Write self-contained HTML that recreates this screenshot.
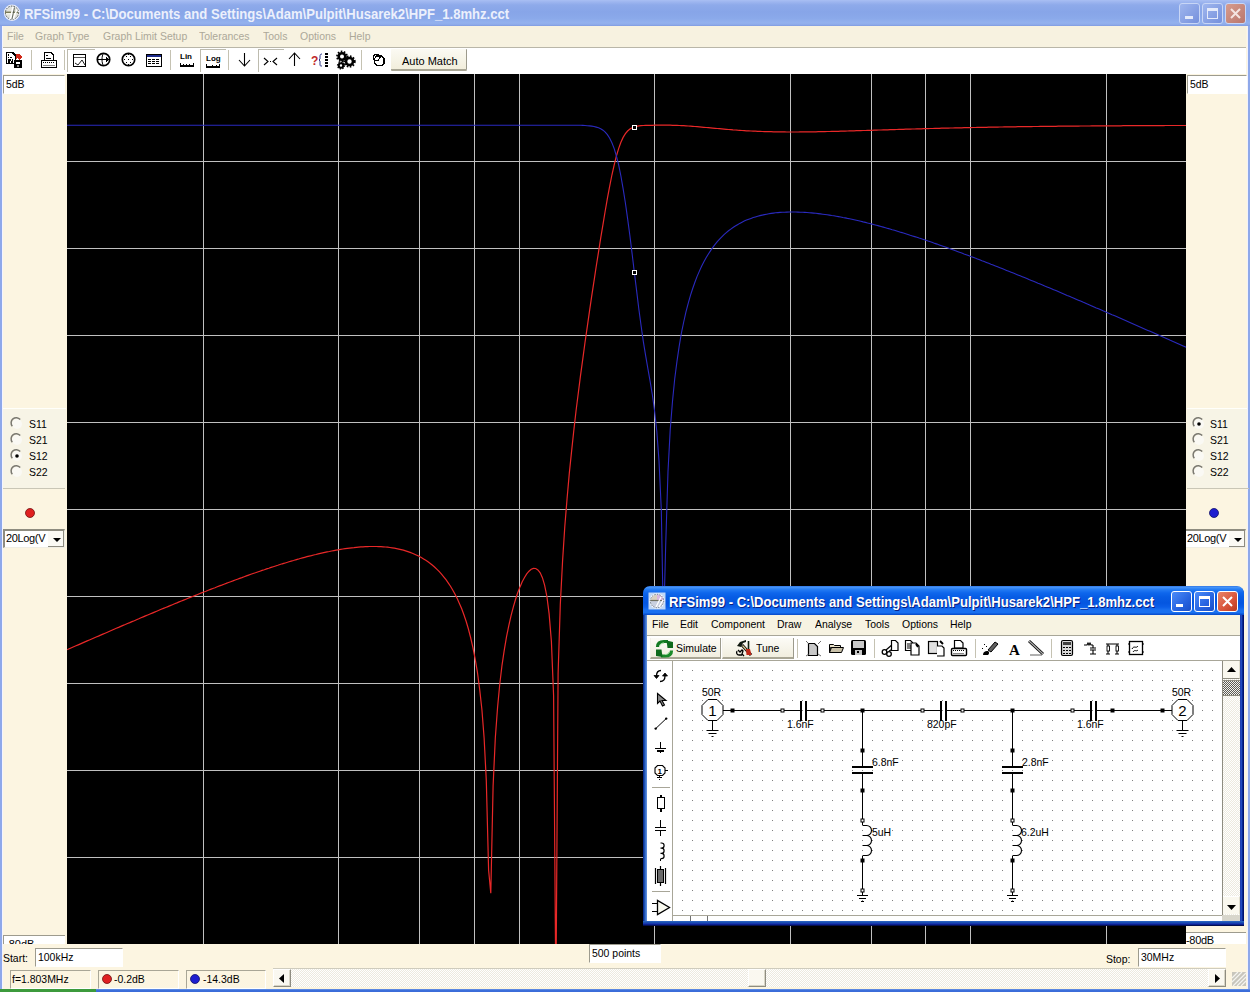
<!DOCTYPE html><html><head><meta charset="utf-8"><title>RFSim99</title><style>
*{margin:0;padding:0;box-sizing:border-box}
html,body{width:1250px;height:992px;overflow:hidden;background:#FCF5E1;font-family:"Liberation Sans", sans-serif;position:relative}
.a{position:absolute}
.t{position:absolute;white-space:pre;font-family:"Liberation Sans", sans-serif}
svg{position:absolute;overflow:visible}
</style></head><body>
<div class="a" style="left:0;top:0;width:1250px;height:26px;background:linear-gradient(#A9BFF3 0px,#9DB5EF 2px,#8EAAEA 5px,#87A5E8 12px,#8AA9EA 18px,#93B1EE 23px,#8CA8E8 25px,#7D99DF 26px)"></div>
<div class="a" style="left:0;top:26px;width:2px;height:966px;background:#8EA8EA"></div>
<div class="a" style="left:2px;top:26px;width:1px;height:963px;background:#F4F4FF"></div>
<div class="a" style="left:1248px;top:26px;width:2px;height:966px;background:#8EA8EA"></div>
<div class="a" style="left:1247px;top:26px;width:1px;height:963px;background:#F2F2FA"></div>
<svg style="left:2px;top:3px" width="22" height="22" viewBox="0 0 22 22"><circle cx="10" cy="9.7" r="7.2" fill="#E2E2DA" stroke="#E8ECF8" stroke-width="2"/><circle cx="10" cy="9.7" r="6.6" fill="none" stroke="#4A524A" stroke-width="1" stroke-dasharray="1.5 1.2"/><path d="M3 9.3H16" stroke="#7A7A58" stroke-width="1.5"/><path d="M4 10.8H13" stroke="#FFFFF0" stroke-width="1"/><path d="M11 4L8.5 16M15 6.5L11 16" stroke="#FFFFFF" stroke-width="1.5"/><path d="M12.5 4.5L10 16" stroke="#505850" stroke-width="0.9"/></svg>
<div class="t" style="left:24px;top:5.67px;font-size:14px;line-height:17px;color:#ECF0FC;font-weight:bold;transform:scaleX(0.935);transform-origin:0 0;">RFSim99 - C:\Documents and Settings\Adam\Pulpit\Husarek2\HPF_1.8mhz.cct</div>
<div class="a" style="left:1179px;top:3px;width:21px;height:21px;border:1px solid #C8D6F6;border-radius:3px;background:linear-gradient(135deg,#9FB6EE,#7590DC)"></div>
<div class="a" style="left:1202px;top:3px;width:21px;height:21px;border:1px solid #C8D6F6;border-radius:3px;background:linear-gradient(135deg,#9FB6EE,#7590DC)"></div>
<div class="a" style="left:1225px;top:3px;width:21px;height:21px;border:1px solid #C8D6F6;border-radius:3px;background:linear-gradient(135deg,#D79C8E,#B9766C)"></div>
<div class="a" style="left:1185px;top:16px;width:8px;height:3px;background:#E4EAFA"></div>
<div class="a" style="left:1207px;top:8px;width:11px;height:11px;border:1px solid #E4EAFA;border-top-width:3px"></div>
<svg style="left:1225px;top:3px" width="21" height="21"><path d="M6 6L15 15M15 6L6 15" stroke="#F4E4E0" stroke-width="2"/></svg>
<div class="a" style="left:3px;top:26px;width:1243px;height:21px;background:#F7F2E0"></div>
<div class="a" style="left:3px;top:47px;width:1243px;height:1px;background:#B9B6A8"></div>
<div class="t" style="left:7px;top:29.06px;font-size:11px;line-height:14px;color:#ACA899;font-weight:normal;transform:scaleX(0.95);transform-origin:0 0;">File</div>
<div class="t" style="left:35px;top:29.06px;font-size:11px;line-height:14px;color:#ACA899;font-weight:normal;transform:scaleX(0.95);transform-origin:0 0;">Graph Type</div>
<div class="t" style="left:103px;top:29.06px;font-size:11px;line-height:14px;color:#ACA899;font-weight:normal;transform:scaleX(0.95);transform-origin:0 0;">Graph Limit Setup</div>
<div class="t" style="left:199px;top:29.06px;font-size:11px;line-height:14px;color:#ACA899;font-weight:normal;transform:scaleX(0.95);transform-origin:0 0;">Tolerances</div>
<div class="t" style="left:263px;top:29.06px;font-size:11px;line-height:14px;color:#ACA899;font-weight:normal;transform:scaleX(0.95);transform-origin:0 0;">Tools</div>
<div class="t" style="left:300px;top:29.06px;font-size:11px;line-height:14px;color:#ACA899;font-weight:normal;transform:scaleX(0.95);transform-origin:0 0;">Options</div>
<div class="t" style="left:349px;top:29.06px;font-size:11px;line-height:14px;color:#ACA899;font-weight:normal;transform:scaleX(0.95);transform-origin:0 0;">Help</div>
<div class="a" style="left:3px;top:48px;width:1243px;height:26px;background:#FFFFFF"></div>
<div class="a" style="left:31px;top:50px;width:1px;height:20px;background:#C5C2B2"></div>
<div class="a" style="left:64px;top:50px;width:1px;height:20px;background:#C5C2B2"></div>
<div class="a" style="left:170px;top:50px;width:1px;height:20px;background:#C5C2B2"></div>
<div class="a" style="left:228px;top:50px;width:1px;height:20px;background:#C5C2B2"></div>
<div class="a" style="left:361px;top:50px;width:1px;height:20px;background:#C5C2B2"></div>
<div class="a" style="left:67px;top:49px;width:28px;height:23px;border-left:1px solid #BDBBAE;border-top:1px solid #BDBBAE;background:#FFFFFF"></div>
<div class="a" style="left:200px;top:49px;width:26px;height:23px;border-left:1px solid #BDBBAE;border-top:1px solid #BDBBAE;background:#FFFFFF"></div>
<div class="a" style="left:258px;top:49px;width:26px;height:23px;border-left:1px solid #BDBBAE;border-top:1px solid #BDBBAE;background:#FFFFFF"></div>
<svg style="left:0;top:0" width="1250" height="80" shape-rendering="crispEdges">
<g fill="none" stroke="#000" stroke-width="1">
<!-- icon1 doc+floppy -->
<path d="M6.5 52.5H12.5L15.5 55.5V63.5H6.5Z" fill="#fff" stroke-width="1.6"/>
<path d="M8 55h1M8 57.5h1M10 57.5h2M8 60h3M12 60h1M8 62h2M11 62h2" stroke="#000" stroke-width="1.2"/>
<path d="M16 53.5l3.5 0.5 2.5 3-2.5 4-1.5-3-2 1z" fill="#D02818" stroke="none"/>
<rect x="14.5" y="60.5" width="7" height="7" fill="#000" stroke-width="1.3"/>
<rect x="16" y="61.5" width="4" height="2" fill="#fff" stroke="none"/>
<rect x="17" y="65" width="2" height="2" fill="#888" stroke="none"/>
<!-- printer -->
<path d="M44.5 52.5H51L53.5 55V60.5H44.5Z" fill="#fff" stroke-width="1.3"/>
<path d="M46 55h2M46 58h5" />
<rect x="41.5" y="60.5" width="15" height="7" rx="1" fill="#fff" stroke-width="1.4"/>
<path d="M43 62.5h12" stroke-dasharray="1 1"/>
<path d="M43 65.5h12" stroke="#888"/>
<!-- graph -->
<rect x="73.5" y="54.5" width="12" height="12" stroke-width="1.2"/>
<path d="M74 57.5h11" stroke="#555"/>
<path d="M75 63l3 2 4-5 3 5" shape-rendering="auto" stroke-width="0.9"/>
<!-- smith -->
<circle cx="103.5" cy="59.5" r="6.2" stroke-width="1.7" shape-rendering="auto"/>
<path d="M97 59.5h10" /><path d="M106 57l2 2.5-2 2.5z" fill="#000"/>
<path d="M103.5 53.5c-2 2-2 10 0 12" shape-rendering="auto"/>
<!-- polar dotted -->
<circle cx="128.5" cy="59.5" r="6.2" stroke-width="1.7" shape-rendering="auto"/>
</g>
<g fill="#000">
<rect x="126" y="56" width="1" height="1"/><rect x="130" y="56" width="1" height="1"/><rect x="124" y="59" width="1" height="1"/><rect x="128" y="59" width="1" height="1"/><rect x="132" y="59" width="1" height="1"/><rect x="126" y="62" width="1" height="1"/><rect x="130" y="62" width="1" height="1"/><rect x="128" y="64" width="1" height="1"/><rect x="128" y="54" width="1" height="1"/>
</g>
<!-- table -->
<rect x="146.5" y="54.5" width="15" height="12" fill="#fff" stroke="#000" stroke-width="1.3"/>
<rect x="147" y="55" width="14" height="2" fill="#1C2A8A"/>
<g fill="#000">
<rect x="148" y="59" width="3" height="1"/><rect x="152" y="59" width="3" height="1"/><rect x="156" y="59" width="3" height="1"/>
<rect x="148" y="61" width="3" height="1"/><rect x="152" y="61" width="3" height="1"/><rect x="156" y="61" width="3" height="1"/>
<rect x="148" y="63" width="3" height="1"/><rect x="152" y="63" width="3" height="1"/><rect x="156" y="63" width="3" height="1"/>
</g>
<!-- Lin -->
<text x="180" y="59" font-family="Liberation Sans" font-weight="bold" font-size="8" fill="#000" shape-rendering="auto">Lin</text>
<path d="M180.5 63v3h13v-3M183.5 64v2M186.5 64v2M189.5 64v2" stroke="#000" fill="none" stroke-width="1.2"/>
<!-- Log -->
<text x="206" y="61" font-family="Liberation Sans" font-weight="bold" font-size="8" fill="#000">Log</text>
<path d="M206.5 64v3h13v-3M212.5 65v2M216.5 65v2" stroke="#000" fill="none" stroke-width="1.2"/>
<!-- down arrow -->
<path d="M244.5 53v13M239 60l5.5 6 5.5-6" stroke="#000" fill="none" stroke-width="1.1" shape-rendering="auto"/>
<!-- >.< -->
<path d="M264 58l4 3.5-4 3.5M277 58l-4 3.5 4 3.5" stroke="#000" fill="none" stroke-width="1.1" shape-rendering="auto"/>
<rect x="270" y="61" width="1" height="1" fill="#000"/>
<!-- up arrow -->
<path d="M294.5 53v13M289 59l5.5-6 5.5 6" stroke="#000" fill="none" stroke-width="1.1" shape-rendering="auto"/>
<!-- ?{ -->
<text x="311" y="65" font-family="Liberation Sans" font-weight="bold" font-size="12" fill="#C02828">?</text>
<path d="M322 54c-2 0-2 1-2 3v2l-1 1 1 1v3c0 2 0 2 2 2" stroke="#303A8A" fill="none" shape-rendering="auto"/>
<g fill="#000"><rect x="325" y="53" width="3" height="2"/><rect x="325" y="56" width="3" height="2"/><rect x="325" y="59" width="3" height="2"/><rect x="325" y="62" width="3" height="2"/><rect x="325" y="65" width="3" height="2"/></g>
<!-- gears -->
<g shape-rendering="auto">
<circle cx="342" cy="56.5" r="3.3" fill="none" stroke="#000" stroke-width="2.6"/>
<circle cx="342" cy="56.5" r="5" fill="none" stroke="#000" stroke-width="1.8" stroke-dasharray="1.6 1.5"/>
<circle cx="349.5" cy="61.5" r="3.5" fill="none" stroke="#000" stroke-width="2.6"/>
<circle cx="349.5" cy="61.5" r="5.3" fill="none" stroke="#000" stroke-width="1.8" stroke-dasharray="1.6 1.5"/>
<circle cx="341" cy="65.5" r="2.2" fill="none" stroke="#000" stroke-width="2"/>
<circle cx="341" cy="65.5" r="3.4" fill="none" stroke="#000" stroke-width="1.4" stroke-dasharray="1.3 1.3"/>
</g>
<!-- two octagons -->
<path d="M375 54.5h3l2 2v1.5M374.5 60.5l-1-1.5v-2.5l1.5-2" stroke="#000" fill="none" stroke-width="1.2"/>
<path d="M376.5 56h5l2.5 2.5v5l-2 2h-5l-2.5-2.5v-4.5z" stroke="#000" fill="none" stroke-width="1.2"/>
<path d="M374.5 60.5h3.5l3-4" stroke="#000" fill="none" stroke-width="1"/>
</svg>
<div class="a" style="left:391px;top:49px;width:76px;height:22px;background:linear-gradient(#FBFAF3,#F2EEDC);border-right:1px solid #9C9A8C;border-bottom:2px solid #A8A594;border-radius:1px"></div>
<div class="t" style="left:402px;top:54.06px;font-size:11px;line-height:14px;color:#000;font-weight:normal;transform:scaleX(1.0);transform-origin:0 0;">Auto Match</div>
<svg style="left:67px;top:74px" width="1119" height="870" viewBox="0 0 1119 870"><rect width="1119" height="870" fill="#000"/><path d="M136.5 0V870 M271.5 0V870 M352.5 0V870 M407.5 0V870 M452.5 0V870 M587.5 0V870 M723.5 0V870 M804.5 0V870 M858.5 0V870 M903.5 0V870 M1039.5 0V870 M0 87.5H1119 M0 174.5H1119 M0 261.5H1119 M0 348.5H1119 M0 435.5H1119 M0 522.5H1119 M0 609.5H1119 M0 696.5H1119 M0 783.5H1119" stroke="#C0C0C0" stroke-width="1" shape-rendering="crispEdges"/><svg x="0" y="0" width="1119" height="870" style="overflow:hidden"><polyline points="0.0,575.8 2.2,574.8 4.5,573.8 6.7,572.8 9.0,571.8 11.2,570.9 13.5,569.9 15.7,568.9 17.9,567.9 20.2,566.9 22.4,566.0 24.7,565.0 26.9,564.0 29.2,563.0 31.4,562.1 33.6,561.1 35.9,560.1 38.1,559.2 40.4,558.2 42.6,557.2 44.8,556.3 47.1,555.3 49.3,554.3 51.6,553.4 53.8,552.4 56.1,551.4 58.3,550.5 60.5,549.5 62.8,548.6 65.0,547.6 67.3,546.7 69.5,545.7 71.8,544.8 74.0,543.8 76.2,542.9 78.5,541.9 80.7,541.0 83.0,540.0 85.2,539.1 87.5,538.1 89.7,537.2 91.9,536.3 94.2,535.3 96.4,534.4 98.7,533.5 100.9,532.6 103.2,531.6 105.4,530.7 107.6,529.8 109.9,528.9 112.1,527.9 114.4,527.0 116.6,526.1 118.9,525.2 121.1,524.3 123.3,523.4 125.6,522.5 127.8,521.6 130.1,520.7 132.3,519.8 134.5,518.9 136.8,518.0 139.0,517.2 141.3,516.3 143.5,515.4 145.8,514.5 148.0,513.7 150.2,512.8 152.5,511.9 154.7,511.1 157.0,510.2 159.2,509.4 161.5,508.5 163.7,507.7 165.9,506.9 168.2,506.0 170.4,505.2 172.7,504.4 174.9,503.6 177.2,502.7 179.4,501.9 181.6,501.1 183.9,500.3 186.1,499.5 188.4,498.8 190.6,498.0 192.9,497.2 195.1,496.4 197.3,495.7 199.6,494.9 201.8,494.2 204.1,493.4 206.3,492.7 208.6,492.0 210.8,491.3 213.0,490.5 215.3,489.8 217.5,489.2 219.8,488.5 222.0,487.8 224.2,487.1 226.5,486.5 228.7,485.8 231.0,485.2 233.2,484.5 235.5,483.9 237.7,483.3 239.9,482.7 242.2,482.1 244.4,481.6 246.7,481.0 248.9,480.5 251.2,479.9 253.4,479.4 255.6,478.9 257.9,478.4 260.1,477.9 262.4,477.5 264.6,477.0 266.9,476.6 269.1,476.2 271.3,475.8 273.6,475.4 275.8,475.0 278.1,474.7 280.3,474.4 282.6,474.1 284.8,473.8 287.0,473.6 289.3,473.3 291.5,473.1 293.8,472.9 296.0,472.8 298.3,472.7 300.5,472.6 302.7,472.5 305.0,472.5 307.2,472.5 309.5,472.5 311.7,472.6 313.9,472.7 316.2,472.8 318.4,473.0 320.7,473.2 322.9,473.5 325.2,473.8 327.4,474.2 329.6,474.6 331.9,475.1 334.1,475.6 336.4,476.2 338.6,476.9 340.9,477.6 343.1,478.4 345.3,479.2 347.6,480.2 349.8,481.2 352.1,482.3 354.3,483.6 356.6,484.9 358.8,486.3 361.0,487.8 363.3,489.5 365.5,491.3 367.8,493.3 370.0,495.4 372.3,497.7 374.5,500.1 376.7,502.8 379.0,505.7 381.2,508.8 383.5,512.2 385.7,516.0 387.9,520.0 390.2,524.5 392.4,529.4 394.7,534.8 396.9,540.8 399.2,547.5 401.4,555.0 403.6,563.5 405.9,573.3 408.1,584.7 410.4,598.2 412.6,614.7 414.9,635.5 417.1,663.7 419.3,706.6 421.6,796.0 423.8,819.3 426.1,712.0 428.3,664.3 430.6,633.0 432.8,609.8 435.0,591.3 437.3,575.9 439.5,562.9 441.8,551.6 444.0,541.8 446.3,533.1 448.5,525.5 450.7,518.8 453.0,512.9 455.2,507.8 457.5,503.5 459.7,499.9 462.0,497.2 464.2,495.3 466.4,494.4 468.7,494.5 470.9,495.9 473.2,498.8 475.4,503.7 477.6,511.2 479.9,522.5 482.1,539.6 484.4,567.5 486.6,621.8 488.9,925.4 491.1,599.6 493.3,530.6 495.6,486.5 497.8,452.5 500.1,424.2 502.3,399.4 504.6,377.1 506.8,356.5 509.0,337.2 511.3,319.0 513.5,301.6 515.8,284.8 518.0,268.5 520.3,252.7 522.5,237.2 524.7,222.1 527.0,207.2 529.2,192.5 531.5,178.2 533.7,164.1 536.0,150.3 538.2,137.0 540.4,124.3 542.7,112.2 544.9,101.0 547.2,90.9 549.4,82.0 551.7,74.4 553.9,68.2 556.1,63.4 558.4,59.7 560.6,57.0 562.9,55.0 565.1,53.7 567.3,52.8 569.6,52.3 571.8,51.9 574.1,51.7 576.3,51.5 578.6,51.4 580.8,51.4 583.0,51.3 585.3,51.3 587.5,51.2 589.8,51.2 592.0,51.2 594.3,51.2 596.5,51.2 598.7,51.2 601.0,51.2 603.2,51.2 605.5,51.3 607.7,51.3 610.0,51.4 612.2,51.5 614.4,51.6 616.7,51.7 618.9,51.8 621.2,52.0 623.4,52.1 625.7,52.3 627.9,52.5 630.1,52.7 632.4,52.9 634.6,53.1 636.9,53.3 639.1,53.5 641.4,53.7 643.6,53.9 645.8,54.1 648.1,54.3 650.3,54.5 652.6,54.7 654.8,54.9 657.0,55.1 659.3,55.3 661.5,55.5 663.8,55.7 666.0,55.9 668.3,56.0 670.5,56.2 672.7,56.3 675.0,56.5 677.2,56.6 679.5,56.8 681.7,56.9 684.0,57.0 686.2,57.1 688.4,57.2 690.7,57.3 692.9,57.4 695.2,57.5 697.4,57.6 699.7,57.6 701.9,57.7 704.1,57.7 706.4,57.8 708.6,57.8 710.9,57.9 713.1,57.9 715.4,57.9 717.6,57.9 719.8,58.0 722.1,58.0 724.3,58.0 726.6,58.0 728.8,58.0 731.1,58.0 733.3,57.9 735.5,57.9 737.8,57.9 740.0,57.9 742.3,57.9 744.5,57.8 746.7,57.8 749.0,57.8 751.2,57.7 753.5,57.7 755.7,57.6 758.0,57.6 760.2,57.5 762.4,57.5 764.7,57.4 766.9,57.4 769.2,57.3 771.4,57.3 773.7,57.2 775.9,57.1 778.1,57.1 780.4,57.0 782.6,56.9 784.9,56.9 787.1,56.8 789.4,56.7 791.6,56.7 793.8,56.6 796.1,56.5 798.3,56.5 800.6,56.4 802.8,56.3 805.1,56.3 807.3,56.2 809.5,56.1 811.8,56.0 814.0,56.0 816.3,55.9 818.5,55.8 820.7,55.8 823.0,55.7 825.2,55.6 827.5,55.6 829.7,55.5 832.0,55.4 834.2,55.4 836.4,55.3 838.7,55.2 840.9,55.2 843.2,55.1 845.4,55.0 847.7,55.0 849.9,54.9 852.1,54.8 854.4,54.8 856.6,54.7 858.9,54.6 861.1,54.6 863.4,54.5 865.6,54.5 867.8,54.4 870.1,54.3 872.3,54.3 874.6,54.2 876.8,54.2 879.1,54.1 881.3,54.1 883.5,54.0 885.8,54.0 888.0,53.9 890.3,53.9 892.5,53.8 894.8,53.8 897.0,53.7 899.2,53.7 901.5,53.6 903.7,53.6 906.0,53.5 908.2,53.5 910.4,53.4 912.7,53.4 914.9,53.3 917.2,53.3 919.4,53.3 921.7,53.2 923.9,53.2 926.1,53.1 928.4,53.1 930.6,53.1 932.9,53.0 935.1,53.0 937.4,52.9 939.6,52.9 941.8,52.9 944.1,52.8 946.3,52.8 948.6,52.8 950.8,52.7 953.1,52.7 955.3,52.7 957.5,52.6 959.8,52.6 962.0,52.6 964.3,52.6 966.5,52.5 968.8,52.5 971.0,52.5 973.2,52.4 975.5,52.4 977.7,52.4 980.0,52.4 982.2,52.3 984.5,52.3 986.7,52.3 988.9,52.3 991.2,52.2 993.4,52.2 995.7,52.2 997.9,52.2 1000.1,52.2 1002.4,52.1 1004.6,52.1 1006.9,52.1 1009.1,52.1 1011.4,52.1 1013.6,52.0 1015.8,52.0 1018.1,52.0 1020.3,52.0 1022.6,52.0 1024.8,51.9 1027.1,51.9 1029.3,51.9 1031.5,51.9 1033.8,51.9 1036.0,51.9 1038.3,51.9 1040.5,51.8 1042.8,51.8 1045.0,51.8 1047.2,51.8 1049.5,51.8 1051.7,51.8 1054.0,51.8 1056.2,51.7 1058.5,51.7 1060.7,51.7 1062.9,51.7 1065.2,51.7 1067.4,51.7 1069.7,51.7 1071.9,51.7 1074.2,51.6 1076.4,51.6 1078.6,51.6 1080.9,51.6 1083.1,51.6 1085.4,51.6 1087.6,51.6 1089.8,51.6 1092.1,51.6 1094.3,51.6 1096.6,51.6 1098.8,51.5 1101.1,51.5 1103.3,51.5 1105.5,51.5 1107.8,51.5 1110.0,51.5 1112.3,51.5 1114.5,51.5 1116.8,51.5 1119.0,51.5" fill="none" stroke="#E82828" stroke-width="1.2"/><polyline points="0.0,51.2 2.2,51.2 4.5,51.2 6.7,51.2 9.0,51.2 11.2,51.2 13.5,51.2 15.7,51.2 17.9,51.2 20.2,51.2 22.4,51.2 24.7,51.2 26.9,51.2 29.2,51.2 31.4,51.2 33.6,51.2 35.9,51.2 38.1,51.2 40.4,51.2 42.6,51.2 44.8,51.2 47.1,51.2 49.3,51.2 51.6,51.2 53.8,51.2 56.1,51.2 58.3,51.2 60.5,51.2 62.8,51.2 65.0,51.2 67.3,51.2 69.5,51.2 71.8,51.2 74.0,51.2 76.2,51.2 78.5,51.2 80.7,51.2 83.0,51.2 85.2,51.2 87.5,51.2 89.7,51.2 91.9,51.2 94.2,51.2 96.4,51.2 98.7,51.2 100.9,51.2 103.2,51.2 105.4,51.2 107.6,51.2 109.9,51.2 112.1,51.2 114.4,51.2 116.6,51.2 118.9,51.2 121.1,51.2 123.3,51.2 125.6,51.2 127.8,51.2 130.1,51.2 132.3,51.2 134.5,51.2 136.8,51.2 139.0,51.2 141.3,51.2 143.5,51.2 145.8,51.2 148.0,51.2 150.2,51.2 152.5,51.2 154.7,51.2 157.0,51.2 159.2,51.2 161.5,51.2 163.7,51.2 165.9,51.2 168.2,51.2 170.4,51.2 172.7,51.2 174.9,51.2 177.2,51.2 179.4,51.2 181.6,51.2 183.9,51.2 186.1,51.2 188.4,51.2 190.6,51.2 192.9,51.2 195.1,51.2 197.3,51.2 199.6,51.2 201.8,51.2 204.1,51.2 206.3,51.2 208.6,51.2 210.8,51.2 213.0,51.2 215.3,51.2 217.5,51.2 219.8,51.2 222.0,51.2 224.2,51.2 226.5,51.2 228.7,51.2 231.0,51.2 233.2,51.2 235.5,51.2 237.7,51.2 239.9,51.2 242.2,51.2 244.4,51.2 246.7,51.2 248.9,51.2 251.2,51.2 253.4,51.2 255.6,51.2 257.9,51.2 260.1,51.2 262.4,51.2 264.6,51.2 266.9,51.2 269.1,51.2 271.3,51.2 273.6,51.2 275.8,51.2 278.1,51.2 280.3,51.2 282.6,51.2 284.8,51.2 287.0,51.2 289.3,51.2 291.5,51.2 293.8,51.2 296.0,51.2 298.3,51.2 300.5,51.2 302.7,51.2 305.0,51.2 307.2,51.2 309.5,51.2 311.7,51.2 313.9,51.2 316.2,51.2 318.4,51.2 320.7,51.2 322.9,51.2 325.2,51.2 327.4,51.2 329.6,51.2 331.9,51.2 334.1,51.2 336.4,51.2 338.6,51.2 340.9,51.2 343.1,51.2 345.3,51.2 347.6,51.2 349.8,51.2 352.1,51.2 354.3,51.2 356.6,51.2 358.8,51.2 361.0,51.2 363.3,51.2 365.5,51.2 367.8,51.2 370.0,51.2 372.3,51.2 374.5,51.2 376.7,51.2 379.0,51.2 381.2,51.2 383.5,51.2 385.7,51.2 387.9,51.2 390.2,51.2 392.4,51.2 394.7,51.2 396.9,51.2 399.2,51.2 401.4,51.2 403.6,51.2 405.9,51.2 408.1,51.2 410.4,51.2 412.6,51.2 414.9,51.2 417.1,51.2 419.3,51.2 421.6,51.2 423.8,51.2 426.1,51.2 428.3,51.2 430.6,51.2 432.8,51.2 435.0,51.2 437.3,51.2 439.5,51.2 441.8,51.2 444.0,51.2 446.3,51.2 448.5,51.2 450.7,51.2 453.0,51.2 455.2,51.2 457.5,51.2 459.7,51.2 462.0,51.2 464.2,51.2 466.4,51.2 468.7,51.2 470.9,51.2 473.2,51.2 475.4,51.2 477.6,51.2 479.9,51.2 482.1,51.2 484.4,51.2 486.6,51.2 488.9,51.2 491.1,51.2 493.3,51.2 495.6,51.2 497.8,51.2 500.1,51.2 502.3,51.2 504.6,51.2 506.8,51.2 509.0,51.2 511.3,51.3 513.5,51.3 515.8,51.4 518.0,51.5 520.3,51.7 522.5,51.9 524.7,52.1 527.0,52.5 529.2,53.1 531.5,53.8 533.7,54.8 536.0,56.2 538.2,58.1 540.4,60.7 542.7,64.2 544.9,68.7 547.2,74.6 549.4,82.0 551.7,91.1 553.9,102.0 556.1,114.7 558.4,129.0 560.6,144.7 562.9,161.7 565.1,179.6 567.3,198.0 569.6,216.6 571.8,234.7 574.1,251.7 576.3,267.3 578.6,281.3 580.8,294.1 583.0,306.7 585.3,320.3 587.5,336.4 589.8,357.3 592.0,386.9 594.3,435.8 596.5,554.2 598.7,470.9 601.0,397.4 603.2,356.1 605.5,327.2 607.7,305.0 610.0,287.1 612.2,272.1 614.4,259.2 616.7,248.0 618.9,238.2 621.2,229.4 623.4,221.6 625.7,214.5 627.9,208.2 630.1,202.4 632.4,197.1 634.6,192.2 636.9,187.8 639.1,183.7 641.4,180.0 643.6,176.6 645.8,173.4 648.1,170.4 650.3,167.7 652.6,165.2 654.8,162.9 657.0,160.7 659.3,158.7 661.5,156.8 663.8,155.1 666.0,153.5 668.3,152.0 670.5,150.7 672.7,149.4 675.0,148.2 677.2,147.1 679.5,146.1 681.7,145.2 684.0,144.4 686.2,143.6 688.4,142.9 690.7,142.2 692.9,141.6 695.2,141.1 697.4,140.6 699.7,140.2 701.9,139.8 704.1,139.4 706.4,139.1 708.6,138.8 710.9,138.6 713.1,138.4 715.4,138.3 717.6,138.2 719.8,138.1 722.1,138.0 724.3,138.0 726.6,138.0 728.8,138.0 731.1,138.1 733.3,138.2 735.5,138.3 737.8,138.4 740.0,138.5 742.3,138.7 744.5,138.9 746.7,139.1 749.0,139.3 751.2,139.6 753.5,139.9 755.7,140.2 758.0,140.5 760.2,140.8 762.4,141.1 764.7,141.5 766.9,141.8 769.2,142.2 771.4,142.6 773.7,143.0 775.9,143.5 778.1,143.9 780.4,144.4 782.6,144.8 784.9,145.3 787.1,145.8 789.4,146.3 791.6,146.8 793.8,147.3 796.1,147.9 798.3,148.4 800.6,149.0 802.8,149.5 805.1,150.1 807.3,150.7 809.5,151.3 811.8,151.9 814.0,152.5 816.3,153.1 818.5,153.7 820.7,154.4 823.0,155.0 825.2,155.7 827.5,156.3 829.7,157.0 832.0,157.7 834.2,158.4 836.4,159.0 838.7,159.7 840.9,160.4 843.2,161.2 845.4,161.9 847.7,162.6 849.9,163.3 852.1,164.1 854.4,164.8 856.6,165.5 858.9,166.3 861.1,167.1 863.4,167.8 865.6,168.6 867.8,169.4 870.1,170.1 872.3,170.9 874.6,171.7 876.8,172.5 879.1,173.3 881.3,174.1 883.5,174.9 885.8,175.7 888.0,176.6 890.3,177.4 892.5,178.2 894.8,179.0 897.0,179.9 899.2,180.7 901.5,181.5 903.7,182.4 906.0,183.2 908.2,184.1 910.4,184.9 912.7,185.8 914.9,186.7 917.2,187.5 919.4,188.4 921.7,189.3 923.9,190.2 926.1,191.0 928.4,191.9 930.6,192.8 932.9,193.7 935.1,194.6 937.4,195.5 939.6,196.4 941.8,197.3 944.1,198.2 946.3,199.1 948.6,200.0 950.8,200.9 953.1,201.8 955.3,202.7 957.5,203.6 959.8,204.5 962.0,205.5 964.3,206.4 966.5,207.3 968.8,208.2 971.0,209.2 973.2,210.1 975.5,211.0 977.7,212.0 980.0,212.9 982.2,213.8 984.5,214.8 986.7,215.7 988.9,216.6 991.2,217.6 993.4,218.5 995.7,219.5 997.9,220.4 1000.1,221.4 1002.4,222.3 1004.6,223.3 1006.9,224.2 1009.1,225.2 1011.4,226.2 1013.6,227.1 1015.8,228.1 1018.1,229.0 1020.3,230.0 1022.6,231.0 1024.8,231.9 1027.1,232.9 1029.3,233.9 1031.5,234.8 1033.8,235.8 1036.0,236.8 1038.3,237.7 1040.5,238.7 1042.8,239.7 1045.0,240.7 1047.2,241.6 1049.5,242.6 1051.7,243.6 1054.0,244.6 1056.2,245.5 1058.5,246.5 1060.7,247.5 1062.9,248.5 1065.2,249.5 1067.4,250.4 1069.7,251.4 1071.9,252.4 1074.2,253.4 1076.4,254.4 1078.6,255.4 1080.9,256.4 1083.1,257.3 1085.4,258.3 1087.6,259.3 1089.8,260.3 1092.1,261.3 1094.3,262.3 1096.6,263.3 1098.8,264.3 1101.1,265.3 1103.3,266.3 1105.5,267.2 1107.8,268.2 1110.0,269.2 1112.3,270.2 1114.5,271.2 1116.8,272.2 1119.0,273.2" fill="none" stroke="#2A2ABE" stroke-width="1.1"/></svg><rect x="565.5" y="51.5" width="4" height="4" fill="#000" stroke="#fff" stroke-width="1" shape-rendering="crispEdges"/><rect x="565.5" y="196.5" width="4" height="4" fill="#000" stroke="#fff" stroke-width="1" shape-rendering="crispEdges"/></svg>
<div class="a" style="left:3px;top:75px;width:62px;height:19px;background:#fff;border-top:1px solid #9D9B8E;border-left:1px solid #9D9B8E;border-right:1px solid #FFF;border-bottom:1px solid #FFF"></div>
<div class="t" style="left:6px;top:77.06px;font-size:11px;line-height:14px;color:#000;font-weight:normal;transform:scaleX(0.95);transform-origin:0 0;">5dB</div>
<div class="a" style="left:3px;top:408px;width:63px;height:80px;background:#F7F4E6;border-top:1px solid #FFFFFA"></div>
<svg style="left:11px;top:418px" width="12" height="12"><circle cx="6" cy="6" r="5" fill="#FAF9F4"/><path d="M1.3 8.2A5 5 0 0 1 9.2 1.6" stroke="#7A7870" stroke-width="1.5" fill="none"/></svg>
<div class="t" style="left:29px;top:417.06px;font-size:11px;line-height:14px;color:#000;font-weight:normal;transform:scaleX(0.95);transform-origin:0 0;">S11</div>
<svg style="left:11px;top:434px" width="12" height="12"><circle cx="6" cy="6" r="5" fill="#FAF9F4"/><path d="M1.3 8.2A5 5 0 0 1 9.2 1.6" stroke="#7A7870" stroke-width="1.5" fill="none"/></svg>
<div class="t" style="left:29px;top:433.06px;font-size:11px;line-height:14px;color:#000;font-weight:normal;transform:scaleX(0.95);transform-origin:0 0;">S21</div>
<svg style="left:11px;top:450px" width="12" height="12"><circle cx="6" cy="6" r="5" fill="#FAF9F4"/><path d="M1.3 8.2A5 5 0 0 1 9.2 1.6" stroke="#7A7870" stroke-width="1.5" fill="none"/><circle cx="6" cy="6" r="1.8" fill="#000"/></svg>
<div class="t" style="left:29px;top:449.06px;font-size:11px;line-height:14px;color:#000;font-weight:normal;transform:scaleX(0.95);transform-origin:0 0;">S12</div>
<svg style="left:11px;top:466px" width="12" height="12"><circle cx="6" cy="6" r="5" fill="#FAF9F4"/><path d="M1.3 8.2A5 5 0 0 1 9.2 1.6" stroke="#7A7870" stroke-width="1.5" fill="none"/></svg>
<div class="t" style="left:29px;top:465.06px;font-size:11px;line-height:14px;color:#000;font-weight:normal;transform:scaleX(0.95);transform-origin:0 0;">S22</div>
<div class="a" style="left:3px;top:488px;width:62px;height:1px;background:#C9C6B6"></div>
<svg style="left:24px;top:507px" width="12" height="12"><circle cx="6" cy="6" r="4.5" fill="#E02020" stroke="#701010" stroke-width="0.8"/></svg>
<div class="a" style="left:3px;top:529px;width:62px;height:19px;background:#fff;border-top:2px solid #8E8C80;border-left:2px solid #8E8C80;border-right:1px solid #F0EEE4;border-bottom:1px solid #F0EEE4"></div>
<div class="a" style="left:48px;top:531px;width:16px;height:16px;background:#FBFAF4;border-right:1px solid #8E8C80;border-bottom:1px solid #8E8C80"></div>
<svg style="left:53px;top:538px" width="8" height="4"><path d="M0 0H8L4 4z" fill="#000"/></svg>
<div class="t" style="left:6px;top:531.06px;font-size:11px;line-height:14px;color:#000;font-weight:normal;letter-spacing:-0.35px">20Log(V</div>
<div class="a" style="left:1187px;top:75px;width:60px;height:19px;background:#fff;border-top:1px solid #9D9B8E;border-left:1px solid #9D9B8E;border-right:1px solid #FFF;border-bottom:1px solid #FFF"></div>
<div class="t" style="left:1190px;top:77.06px;font-size:11px;line-height:14px;color:#000;font-weight:normal;transform:scaleX(0.95);transform-origin:0 0;">5dB</div>
<div class="a" style="left:1187px;top:408px;width:60px;height:80px;background:#F7F4E6;border-top:1px solid #FFFFFA"></div>
<svg style="left:1193px;top:418px" width="12" height="12"><circle cx="6" cy="6" r="5" fill="#FAF9F4"/><path d="M1.3 8.2A5 5 0 0 1 9.2 1.6" stroke="#7A7870" stroke-width="1.5" fill="none"/><circle cx="6" cy="6" r="1.8" fill="#000"/></svg>
<div class="t" style="left:1210px;top:417.06px;font-size:11px;line-height:14px;color:#000;font-weight:normal;transform:scaleX(0.95);transform-origin:0 0;">S11</div>
<svg style="left:1193px;top:434px" width="12" height="12"><circle cx="6" cy="6" r="5" fill="#FAF9F4"/><path d="M1.3 8.2A5 5 0 0 1 9.2 1.6" stroke="#7A7870" stroke-width="1.5" fill="none"/></svg>
<div class="t" style="left:1210px;top:433.06px;font-size:11px;line-height:14px;color:#000;font-weight:normal;transform:scaleX(0.95);transform-origin:0 0;">S21</div>
<svg style="left:1193px;top:450px" width="12" height="12"><circle cx="6" cy="6" r="5" fill="#FAF9F4"/><path d="M1.3 8.2A5 5 0 0 1 9.2 1.6" stroke="#7A7870" stroke-width="1.5" fill="none"/></svg>
<div class="t" style="left:1210px;top:449.06px;font-size:11px;line-height:14px;color:#000;font-weight:normal;transform:scaleX(0.95);transform-origin:0 0;">S12</div>
<svg style="left:1193px;top:466px" width="12" height="12"><circle cx="6" cy="6" r="5" fill="#FAF9F4"/><path d="M1.3 8.2A5 5 0 0 1 9.2 1.6" stroke="#7A7870" stroke-width="1.5" fill="none"/></svg>
<div class="t" style="left:1210px;top:465.06px;font-size:11px;line-height:14px;color:#000;font-weight:normal;transform:scaleX(0.95);transform-origin:0 0;">S22</div>
<div class="a" style="left:1187px;top:488px;width:62px;height:1px;background:#C9C6B6"></div>
<svg style="left:1208px;top:507px" width="12" height="12"><circle cx="6" cy="6" r="4.5" fill="#1E1ED0" stroke="#10106A" stroke-width="0.8"/></svg>
<div class="a" style="left:1184px;top:529px;width:62px;height:19px;background:#fff;border-top:2px solid #8E8C80;border-left:2px solid #8E8C80;border-right:1px solid #F0EEE4;border-bottom:1px solid #F0EEE4"></div>
<div class="a" style="left:1229px;top:531px;width:16px;height:16px;background:#FBFAF4;border-right:1px solid #8E8C80;border-bottom:1px solid #8E8C80"></div>
<svg style="left:1234px;top:538px" width="8" height="4"><path d="M0 0H8L4 4z" fill="#000"/></svg>
<div class="a" style="left:1184px;top:528px;width:2px;height:21px;background:#000"></div>
<div class="t" style="left:1187px;top:531.06px;font-size:11px;line-height:14px;color:#000;font-weight:normal;letter-spacing:-0.35px">20Log(V</div>
<div class="a" style="left:3px;top:935px;width:62px;height:9px;overflow:hidden;background:#fff;border-top:1px solid #9D9B8E;border-left:1px solid #9D9B8E"><div class="t" style="left:1px;top:2px;font-size:11px;line-height:13px">-80dB</div></div>
<div class="a" style="left:1186px;top:932px;width:60px;height:12px;overflow:hidden;background:#fff;border-top:1px solid #9D9B8E"><div class="t" style="left:0px;top:1px;font-size:11px;line-height:13px;letter-spacing:-0.3px">-80dB</div></div>
<div class="t" style="left:3px;top:951.06px;font-size:11px;line-height:14px;color:#000;font-weight:normal;transform:scaleX(0.95);transform-origin:0 0;">Start:</div>
<div class="a" style="left:35px;top:948px;width:88px;height:19px;background:#fff;border-top:1px solid #9D9B8E;border-left:1px solid #9D9B8E;border-right:1px solid #FFF;border-bottom:1px solid #FFF"></div>
<div class="t" style="left:38px;top:950.06px;font-size:11px;line-height:14px;color:#000;font-weight:normal;transform:scaleX(0.95);transform-origin:0 0;">100kHz</div>
<div class="a" style="left:589px;top:944px;width:72px;height:19px;background:#fff;border-top:1px solid #9D9B8E;border-left:1px solid #9D9B8E;border-right:1px solid #FFF;border-bottom:1px solid #FFF"></div>
<div class="t" style="left:592px;top:946.06px;font-size:11px;line-height:14px;color:#000;font-weight:normal;transform:scaleX(0.95);transform-origin:0 0;">500 points</div>
<div class="t" style="left:1106px;top:952.06px;font-size:11px;line-height:14px;color:#000;font-weight:normal;transform:scaleX(0.95);transform-origin:0 0;">Stop:</div>
<div class="a" style="left:1138px;top:948px;width:88px;height:19px;background:#fff;border-top:1px solid #9D9B8E;border-left:1px solid #9D9B8E;border-right:1px solid #FFF;border-bottom:1px solid #FFF"></div>
<div class="t" style="left:1141px;top:950.06px;font-size:11px;line-height:14px;color:#000;font-weight:normal;transform:scaleX(0.95);transform-origin:0 0;">30MHz</div>
<div class="a" style="left:10px;top:970px;width:81px;height:19px;border-top:1px solid #A9A696;border-left:1px solid #A9A696;border-right:1px solid #fff;border-bottom:1px solid #fff"></div>
<div class="a" style="left:98px;top:970px;width:81px;height:19px;border-top:1px solid #A9A696;border-left:1px solid #A9A696;border-right:1px solid #fff;border-bottom:1px solid #fff"></div>
<div class="a" style="left:186px;top:970px;width:80px;height:19px;border-top:1px solid #A9A696;border-left:1px solid #A9A696;border-right:1px solid #fff;border-bottom:1px solid #fff"></div>
<div class="t" style="left:12px;top:972.06px;font-size:11px;line-height:14px;color:#000;font-weight:normal;transform:scaleX(0.95);transform-origin:0 0;">f=1.803MHz</div>
<svg style="left:100px;top:972px" width="14" height="14"><circle cx="7" cy="7" r="4.5" fill="#E02020" stroke="#701010" stroke-width="0.8"/></svg>
<div class="t" style="left:114px;top:972.06px;font-size:11px;line-height:14px;color:#000;font-weight:normal;transform:scaleX(0.95);transform-origin:0 0;">-0.2dB</div>
<svg style="left:188px;top:972px" width="14" height="14"><circle cx="7" cy="7" r="4.5" fill="#1E1ED0" stroke="#10106A" stroke-width="0.8"/></svg>
<div class="t" style="left:203px;top:972.06px;font-size:11px;line-height:14px;color:#000;font-weight:normal;transform:scaleX(0.95);transform-origin:0 0;">-14.3dB</div>
<div class="a" style="left:273px;top:968px;width:953px;height:1px;background:#CFCCBE"></div>
<div class="a" style="left:273px;top:969px;width:953px;height:18px;background-color:#FFFFFF;background-image:repeating-conic-gradient(#EDEADF 0 25%,#FFFFFF 0 50%);background-size:2px 2px"></div>
<div class="a" style="left:273px;top:969px;width:18px;height:18px;background:#FAF8F0;border-top:1px solid #FFF;border-left:1px solid #FFF;border-right:1px solid #8E8C80;border-bottom:1px solid #8E8C80;box-shadow:inset -1px -1px 0 #D8D5C6"></div>
<svg style="left:279px;top:974px" width="5" height="9"><path d="M5 0V9L0 4.5z" fill="#000"/></svg>
<div class="a" style="left:1208px;top:969px;width:18px;height:18px;background:#FAF8F0;border-top:1px solid #FFF;border-left:1px solid #FFF;border-right:1px solid #8E8C80;border-bottom:1px solid #8E8C80;box-shadow:inset -1px -1px 0 #D8D5C6"></div>
<svg style="left:1215px;top:974px" width="5" height="9"><path d="M0 0V9L5 4.5z" fill="#000"/></svg>
<div class="a" style="left:748px;top:969px;width:18px;height:18px;background:#FAF8F0;border-top:1px solid #FFF;border-left:1px solid #FFF;border-right:1px solid #8E8C80;border-bottom:1px solid #8E8C80;box-shadow:inset -1px -1px 0 #D8D5C6"></div>
<svg style="left:1232px;top:972px" width="14" height="14"><rect width="14" height="14" fill="#C8C6BC"/><path d="M14 1L1 14M14 5L5 14M14 9L9 14M10 0L0 10M6 0L0 6" stroke="#F4F4F0" stroke-width="1.2"/></svg>
<div class="a" style="left:0;top:989px;width:96px;height:3px;background:#3C9A3C"></div>
<div class="a" style="left:96px;top:989px;width:1154px;height:3px;background:linear-gradient(#7AA0E8,#3C70DC 1px,#3A6AD8)"></div>
<div class="a" style="left:643px;top:586px;width:601px;height:340px;background:linear-gradient(90deg,#0A2E90 0 1px,#1C50B0 1px 2px,#3A70C8 2px 3px,#5A88D8 3px 4px,transparent 4px 597px,#2040B0 597px 598px,#2048C0 598px 599px,#0A2890 599px 600px,#001070 600px);border-radius:8px 8px 0 0"></div>
<div class="a" style="left:643px;top:921px;width:601px;height:5px;background:linear-gradient(#2860C0 0 1px,#1A50B0 1px 2px,#1838B0 2px 3px,#0A2090 3px 4px,#050F50 4px)"></div>
<div class="a" style="left:643px;top:586px;width:601px;height:29px;border-radius:7px 7px 0 0;background:linear-gradient(#2A6ADA 0,#4A98FA 1px,#3A8CF8 2px,#2078F2 4px,#0E66EC 7px,#075CE4 11px,#0456E0 17px,#0A5EE8 21px,#1A70F0 24px,#1870F0 27px,#0A50D0 28px,#0A50D0 29px)"></div>
<svg style="left:648px;top:592px" width="18" height="18" viewBox="0 0 18 18"><rect x="0.5" y="0.5" width="17" height="17" fill="#BFD8F8"/><circle cx="9" cy="9" r="7" fill="#D8D0C0" stroke="#F4F8FF" stroke-width="1.5"/><path d="M9 2.5A6.5 6.5 0 0 1 15.5 9H9z" fill="#D8B8E0"/><path d="M2.5 9A6.5 6.5 0 0 0 15.5 9z" fill="#C8D0E0"/><circle cx="9" cy="9" r="6.7" fill="none" stroke="#506070" stroke-width="0.9" stroke-dasharray="1.4 1.2"/><path d="M2.5 8.5H14" stroke="#707060" stroke-width="1.2"/><path d="M13 5L8 15M15 8L11 15" stroke="#FFFFFF" stroke-width="1.3"/></svg>
<div class="t" style="left:669px;top:593.67px;font-size:14px;line-height:17px;color:#FFFFFF;font-weight:bold;text-shadow:1px 1px 0 #0A1E80;transform:scaleX(0.935);transform-origin:0 0;">RFSim99 - C:\Documents and Settings\Adam\Pulpit\Husarek2\HPF_1.8mhz.cct</div>
<div class="a" style="left:1171px;top:591px;width:21px;height:21px;border:1px solid #FFFFFF;border-radius:3px;background:linear-gradient(135deg,#4C8CF8 0%,#2663E0 60%,#1A4FC8 100%)"></div>
<div class="a" style="left:1194px;top:591px;width:21px;height:21px;border:1px solid #FFFFFF;border-radius:3px;background:linear-gradient(135deg,#4C8CF8 0%,#2663E0 60%,#1A4FC8 100%)"></div>
<div class="a" style="left:1217px;top:591px;width:21px;height:21px;border:1px solid #FFFFFF;border-radius:3px;background:linear-gradient(135deg,#E88468 0%,#D8543A 60%,#B83A20 100%)"></div>
<div class="a" style="left:1176px;top:604px;width:7px;height:3px;background:#fff"></div>
<div class="a" style="left:1199px;top:596px;width:11px;height:11px;border:1px solid #fff;border-top-width:3px"></div>
<svg style="left:1217px;top:591px" width="21" height="21"><path d="M6 6L15 15M15 6L6 15" stroke="#fff" stroke-width="2"/></svg>
<div class="a" style="left:647px;top:615px;width:593px;height:20px;background:#F7F3E2"></div>
<div class="a" style="left:647px;top:635px;width:593px;height:1px;background:#A8A698"></div>
<div class="t" style="left:652px;top:617.06px;font-size:11px;line-height:14px;color:#000;font-weight:normal;transform:scaleX(0.95);transform-origin:0 0;">File</div>
<div class="t" style="left:680px;top:617.06px;font-size:11px;line-height:14px;color:#000;font-weight:normal;transform:scaleX(0.95);transform-origin:0 0;">Edit</div>
<div class="t" style="left:711px;top:617.06px;font-size:11px;line-height:14px;color:#000;font-weight:normal;transform:scaleX(0.95);transform-origin:0 0;">Component</div>
<div class="t" style="left:777px;top:617.06px;font-size:11px;line-height:14px;color:#000;font-weight:normal;transform:scaleX(0.95);transform-origin:0 0;">Draw</div>
<div class="t" style="left:815px;top:617.06px;font-size:11px;line-height:14px;color:#000;font-weight:normal;transform:scaleX(0.95);transform-origin:0 0;">Analyse</div>
<div class="t" style="left:865px;top:617.06px;font-size:11px;line-height:14px;color:#000;font-weight:normal;transform:scaleX(0.95);transform-origin:0 0;">Tools</div>
<div class="t" style="left:902px;top:617.06px;font-size:11px;line-height:14px;color:#000;font-weight:normal;transform:scaleX(0.95);transform-origin:0 0;">Options</div>
<div class="t" style="left:950px;top:617.06px;font-size:11px;line-height:14px;color:#000;font-weight:normal;transform:scaleX(0.95);transform-origin:0 0;">Help</div>
<div class="a" style="left:647px;top:636px;width:593px;height:24px;background:#FFFFFF"></div>
<div class="a" style="left:647px;top:660px;width:593px;height:1px;background:#A8A698"></div>
<div class="a" style="left:650px;top:638px;width:71px;height:21px;background:linear-gradient(#FCFBF6,#F1EEDF);border-right:1px solid #9C9A8C;border-bottom:2px solid #A9A695;border-left:1px solid #F4F2EA"></div>
<div class="a" style="left:722px;top:638px;width:72px;height:21px;background:linear-gradient(#FCFBF6,#F1EEDF);border-right:1px solid #9C9A8C;border-bottom:2px solid #A9A695;border-left:1px solid #F4F2EA"></div>
<div class="t" style="left:676px;top:641.06px;font-size:11px;line-height:14px;color:#000;font-weight:normal;transform:scaleX(0.95);transform-origin:0 0;">Simulate</div>
<div class="t" style="left:756px;top:641.06px;font-size:11px;line-height:14px;color:#000;font-weight:normal;transform:scaleX(0.95);transform-origin:0 0;">Tune</div>
<div class="a" style="left:797px;top:639px;width:1px;height:19px;background:#C5C2B2"></div>
<div class="a" style="left:874px;top:639px;width:1px;height:19px;background:#C5C2B2"></div>
<div class="a" style="left:975px;top:639px;width:1px;height:19px;background:#C5C2B2"></div>
<div class="a" style="left:1051px;top:639px;width:1px;height:19px;background:#C5C2B2"></div>
<svg style="left:0;top:0" width="1250" height="992" shape-rendering="auto">
<!-- simulate green arrows -->
<path d="M657.5 647C657.5 642.5 660.5 641.5 664 641.5H668" fill="none" stroke="#137A22" stroke-width="3.2"/>
<path d="M666.5 640.5L673 642V648H667.5z" fill="#0E6A1C"/>
<path d="M671.5 650.5C671.5 655 668.5 656 665 656H661" fill="none" stroke="#1A8A2A" stroke-width="3.2"/>
<path d="M662.5 657L656 656V649.5H661.5z" fill="#0E6A1C"/>
<path d="M660 645.5c1-2 2-2.5 4-2.5M669 652c-1 2-2 2.5-4 2.5" stroke="#9AE09A" stroke-width="1" fill="none"/>
<!-- tune tools -->
<path d="M742 645l9 10" stroke="#000" stroke-width="3"/><path d="M742.5 645.5l8 9" stroke="#D8C890" stroke-width="1.2"/>
<path d="M737 646l3-4 6-2 0 2-3 1-2 4z" fill="#101810"/>
<path d="M748.5 641v8" stroke="#102010" stroke-width="1.6"/>
<path d="M746 649h4l1.5 6h-5z" fill="#C02818"/>
<path d="M738 650l2 2 2-2 1 1-1 3 2 2M737 651c-1 2 0 4 2 4h3" stroke="#000" stroke-width="1.3" fill="none"/>
<!-- new doc -->
<path d="M808.5 643.5h6l3 3v9h-9z" fill="#C8C8C8" stroke="#000" stroke-width="1.2"/>
<path d="M806 641l3 3M821 641l-3 3M806 656l3-2M821 656l-3-2" stroke="#4A4A4A" stroke-width="0.8"/>
<!-- open folder -->
<path d="M829.5 644.5h4l1 1h6v2h-10l-1 5z" fill="#E8E0C8" stroke="#000" stroke-width="1"/>
<path d="M829.5 652.5l2-5h12l-2 5z" fill="#C8C0A8" stroke="#000" stroke-width="1"/>
<!-- save -->
<rect x="851" y="640" width="15" height="15" rx="1.5" fill="#000"/>
<rect x="853" y="641" width="11" height="7" fill="#C8C8C8"/>
<rect x="855" y="650" width="7" height="5" fill="#C8C8C8"/><rect x="857" y="651" width="2" height="2" fill="#000"/>
<!-- cut -->
<circle cx="884.5" cy="652" r="2.3" fill="none" stroke="#000" stroke-width="1.3"/><circle cx="889" cy="654" r="2.3" fill="none" stroke="#000" stroke-width="1.3"/>
<path d="M886 650l7-6M889 651l6-3" stroke="#000" stroke-width="1.2"/>
<path d="M891.5 640.5h4l2.5 2.5v7.5h-6.5z" fill="#fff" stroke="#000" stroke-width="1.2"/>
<!-- copy -->
<path d="M905.5 640.5h5l2 2v8h-7z" fill="#fff" stroke="#000" stroke-width="1.2"/>
<path d="M907 644h3M907 646h4M907 648h4" stroke="#000"/>
<path d="M911 643h5l3 3v9h-8z" fill="#fff" stroke="#000" stroke-width="1.2"/>
<path d="M916 644l2 3" stroke="#000" stroke-width="2"/>
<!-- paste -->
<rect x="928.5" y="641.5" width="9" height="12" fill="#E0E0E0" stroke="#000" stroke-width="1.2"/>
<path d="M937 646h5l2 2v8h-7" fill="#fff" stroke="#000" stroke-width="1.2"/>
<path d="M940 641l3 3" stroke="#000" stroke-width="2"/>
<!-- print -->
<path d="M954.5 640.5h6l2.5 2.5v5h-8.5z" fill="#fff" stroke="#000" stroke-width="1.2"/>
<rect x="951.5" y="648.5" width="15" height="7" rx="1" fill="#fff" stroke="#000" stroke-width="1.4"/>
<path d="M953 650.5h11" stroke="#000" stroke-dasharray="1 1"/><path d="M953 653.5h11" stroke="#888"/>
<!-- eraser -->
<path d="M988 650l7-8 3 2-7 8z" fill="#606060" stroke="#000" stroke-width="1"/>
<path d="M983 655c0-3 2-4 4-4s3 2 1 4z" fill="#000"/>
<g fill="#000"><rect x="984" y="644" width="1" height="1"/><rect x="986" y="646" width="1" height="1"/><rect x="982" y="648" width="1" height="1"/></g>
<!-- A -->
<text x="1009" y="655" font-family="Liberation Serif" font-weight="bold" font-size="15" fill="#000">A</text>
<!-- pencil -->
<path d="M1029 641l14 13" stroke="#000" stroke-width="3"/>
<path d="M1029 641l14 13" stroke="#B0B0B0" stroke-width="1.2"/>
<path d="M1030 655h12" stroke="#606060" stroke-width="1"/>
<!-- calculator -->
<rect x="1061.5" y="640.5" width="11" height="15" rx="1.5" fill="#D8D8D8" stroke="#000" stroke-width="1.2"/>
<rect x="1063" y="642" width="8" height="3" fill="#404040"/>
<g fill="#000"><rect x="1063" y="647" width="2" height="1"/><rect x="1066" y="647" width="2" height="1"/><rect x="1069" y="647" width="2" height="1"/><rect x="1063" y="650" width="2" height="1"/><rect x="1066" y="650" width="2" height="1"/><rect x="1069" y="650" width="2" height="1"/><rect x="1063" y="653" width="2" height="1"/><rect x="1066" y="653" width="2" height="1"/><rect x="1069" y="653" width="2" height="1"/></g>
<!-- filter icon -->
<path d="M1084 645h3l1-2 1 2 1-2 1 2h2M1093 645v3M1090 648h6M1090 650h6M1093 650v4M1090 654h6" stroke="#000" fill="none" stroke-width="1.1"/>
<!-- pi icon -->
<path d="M1106 644h13M1108 644v10M1117 644v10M1106 654h4M1115 654h4" stroke="#000" fill="none" stroke-width="1.1"/>
<rect x="1107" y="646" width="2.5" height="5" fill="#fff" stroke="#000" stroke-width="0.9"/><rect x="1116" y="646" width="2.5" height="5" fill="#fff" stroke="#000" stroke-width="0.9"/>
<!-- box ~ -->
<rect x="1129.5" y="641.5" width="13" height="13" fill="#fff" stroke="#000" stroke-width="1.3"/>
<path d="M1132 649c2-4 4 0 6-3M1133 652c2-3 3 0 5-2" stroke="#000" fill="none" stroke-width="1"/>
<path d="M1128 644h2M1128 652h2M1142 644h2M1142 652h2" stroke="#000"/>
</svg>
<div class="a" style="left:647px;top:661px;width:26px;height:260px;background:#FFFFFF;border-right:1px solid #A8A698"></div>
<div class="a" style="left:652px;top:787px;width:18px;height:1px;background:#A8A698"></div>
<div class="a" style="left:652px;top:891px;width:18px;height:1px;background:#A8A698"></div>
<svg style="left:0;top:0" width="1250" height="992">
<g fill="none" stroke="#000" stroke-width="1.3">
<path d="M661 670.5c-3 0-4.5 2-4.5 5.5"/><path d="M654 675.5h5l-2.5 3z" fill="#000" stroke-width="0.8"/>
<path d="M660 681.5c3 0 5-2 5-5.5"/><path d="M662.5 676h5l-2.5-3z" fill="#000" stroke-width="0.8"/>
<path d="M657.5 693.5v10l2.5-2.5 2.5 5 2-1-2.5-4.5h4z" fill="#8A8A8A" stroke-width="1.1"/>
<path d="M655.7 728.6L666.2 718.6" stroke-width="1"/>
</g>
<circle cx="655.7" cy="728.6" r="1.2" fill="#000"/><circle cx="666.2" cy="718.6" r="1.2" fill="#000"/>
<g fill="none" stroke="#000" stroke-width="1.1" shape-rendering="crispEdges">
<path d="M660.5 742v7M655 748.5h11M657 751h7"/>
<rect x="660" y="752" width="1" height="1" fill="#000" stroke="none"/>
<path d="M657.5 765.5h5l2.5 2.5v5l-2.5 2.5h-5l-2.5-2.5v-5z" shape-rendering="auto"/>
<path d="M665 770.5h3M659.5 775v2M657 777.5h5"/>
<rect x="659" y="779" width="1" height="1" fill="#000" stroke="none"/>
<rect x="657.5" y="797.5" width="7" height="11" fill="#fff"/><path d="M661 795v2.5M661 809v3"/>
<path d="M660.5 819.5v7.5M655 827.5h11M655 830.5h11M660.5 831v5"/>
<path d="M660.5 860.5v-2" />
</g>
<path d="M660.5 843h1a2.6 2.6 0 0 1 0 5.2h-1M661.5 848.2a2.6 2.6 0 0 1 0 5.2h-1M661.5 853.4a2.6 2.6 0 0 1 0 5.2h-1" fill="none" stroke="#000" stroke-width="1.2"/>
<rect x="657.5" y="869.5" width="6" height="13" fill="#6A6A6A" stroke="#000" stroke-width="1"/>
<path d="M655.5 868v16M665.5 868v16M660.5 866v3M660.5 883v3" stroke="#000" stroke-width="1.2" fill="none"/>
<path d="M657.5 900.5v14l12-7z" fill="#FAFAF0" stroke="#000" stroke-width="1.3"/>
<path d="M652 903.5h5.5M652 911.5h5.5" stroke="#000" stroke-width="1.2"/>
<text x="657.6" y="774.2" font-family="Liberation Sans" font-weight="bold" font-size="8" fill="#000">1</text>
</svg>
<div class="a" style="left:673px;top:661px;width:549px;height:254px;background-color:#fff;background-image:radial-gradient(circle at 0.5px 0.5px,#808080 0.7px,transparent 0.9px);background-size:10px 10px;background-position:9px 9px"></div>
<svg style="left:0;top:0" width="1250" height="992"><g stroke="#000" stroke-width="1" fill="none" shape-rendering="crispEdges"><path d="M723 710.5H800M806 710.5H940M945 710.5H1090M1095 710.5H1172"/><rect x="800" y="701" width="2" height="20" fill="#000" stroke="none"/><rect x="805" y="701" width="2" height="20" fill="#000" stroke="none"/><rect x="940" y="701" width="2" height="20" fill="#000" stroke="none"/><rect x="945" y="701" width="2" height="20" fill="#000" stroke="none"/><rect x="1090" y="701" width="2" height="20" fill="#000" stroke="none"/><rect x="1095" y="701" width="2" height="20" fill="#000" stroke="none"/><path d="M862.5 710V767M862.5 774V825M862.5 856V896"/><rect x="852" y="766" width="21" height="2" fill="#000" stroke="none"/><rect x="852" y="772" width="21" height="2" fill="#000" stroke="none"/><path d="M857 895.5H868M859 898.5H866M861 901.5H864"/><path d="M1012.5 710V767M1012.5 774V825M1012.5 856V896"/><rect x="1002" y="766" width="21" height="2" fill="#000" stroke="none"/><rect x="1002" y="772" width="21" height="2" fill="#000" stroke="none"/><path d="M1007 895.5H1018M1009 898.5H1016M1011 901.5H1014"/></g><path d="M862.5 825.5h4a5 5 0 0 1 0 10h-4M866.5 835.5a5 5 0 0 1 0 10h-4M866.5 845.5a5 5 0 0 1 0 10h-4" stroke="#000" stroke-width="1.1" fill="none"/><path d="M1012.5 825.5h4a5 5 0 0 1 0 10h-4M1016.5 835.5a5 5 0 0 1 0 10h-4M1016.5 845.5a5 5 0 0 1 0 10h-4" stroke="#000" stroke-width="1.1" fill="none"/><path d="M708.0 699.5H717.0L723.0 705.5V714.5L717.0 720.5H708.0L702.0 714.5V705.5Z" fill="#fff" stroke="#000" stroke-width="1"/><text x="712.5" y="716" text-anchor="middle" font-family="Liberation Sans" font-size="15" fill="#000">1</text><path d="M712.5 720.5V730M706.5 730.5H718.5M708.5 733.5H716.5M711.5 736.5H713.5" stroke="#000" stroke-width="1" fill="none"/><path d="M1178.0 699.5H1187.0L1193.0 705.5V714.5L1187.0 720.5H1178.0L1172.0 714.5V705.5Z" fill="#fff" stroke="#000" stroke-width="1"/><text x="1182.5" y="716" text-anchor="middle" font-family="Liberation Sans" font-size="15" fill="#000">2</text><path d="M1182.5 720.5V730M1176.5 730.5H1188.5M1178.5 733.5H1186.5M1181.5 736.5H1183.5" stroke="#000" stroke-width="1" fill="none"/><rect x="730.5" y="708.5" width="4" height="4" fill="#000"/><rect x="860.5" y="708.5" width="4" height="4" fill="#000"/><rect x="1010.5" y="708.5" width="4" height="4" fill="#000"/><rect x="1110.5" y="708.5" width="4" height="4" fill="#000"/><rect x="1160.5" y="708.5" width="4" height="4" fill="#000"/><rect x="860.5" y="748.5" width="4" height="4" fill="#000"/><rect x="860.5" y="788.5" width="4" height="4" fill="#000"/><rect x="860.5" y="858.5" width="4" height="4" fill="#000"/><rect x="1010.5" y="748.5" width="4" height="4" fill="#000"/><rect x="1010.5" y="788.5" width="4" height="4" fill="#000"/><rect x="1010.5" y="858.5" width="4" height="4" fill="#000"/><rect x="781" y="709" width="3" height="3" fill="#fff" stroke="#000" stroke-width="1"/><rect x="821" y="709" width="3" height="3" fill="#fff" stroke="#000" stroke-width="1"/><rect x="921" y="709" width="3" height="3" fill="#fff" stroke="#000" stroke-width="1"/><rect x="961" y="709" width="3" height="3" fill="#fff" stroke="#000" stroke-width="1"/><rect x="1071" y="709" width="3" height="3" fill="#fff" stroke="#000" stroke-width="1"/><rect x="861" y="819" width="3" height="3" fill="#fff" stroke="#000" stroke-width="1"/><rect x="861" y="889" width="3" height="3" fill="#fff" stroke="#000" stroke-width="1"/><rect x="1011" y="819" width="3" height="3" fill="#fff" stroke="#000" stroke-width="1"/><rect x="1011" y="889" width="3" height="3" fill="#fff" stroke="#000" stroke-width="1"/></svg>
<div class="t" style="left:702px;top:685.06px;font-size:11px;line-height:14px;color:#000;font-weight:normal;transform:scaleX(0.95);transform-origin:0 0;">50R</div>
<div class="t" style="left:1172px;top:685.06px;font-size:11px;line-height:14px;color:#000;font-weight:normal;transform:scaleX(0.95);transform-origin:0 0;">50R</div>
<div class="t" style="left:787px;top:717.06px;font-size:11px;line-height:14px;color:#000;font-weight:normal;transform:scaleX(0.95);transform-origin:0 0;">1.6nF</div>
<div class="t" style="left:927px;top:717.06px;font-size:11px;line-height:14px;color:#000;font-weight:normal;transform:scaleX(0.95);transform-origin:0 0;">820pF</div>
<div class="t" style="left:1077px;top:717.06px;font-size:11px;line-height:14px;color:#000;font-weight:normal;transform:scaleX(0.95);transform-origin:0 0;">1.6nF</div>
<div class="t" style="left:872px;top:755.06px;font-size:11px;line-height:14px;color:#000;font-weight:normal;transform:scaleX(0.95);transform-origin:0 0;">6.8nF</div>
<div class="t" style="left:1022px;top:755.06px;font-size:11px;line-height:14px;color:#000;font-weight:normal;transform:scaleX(0.95);transform-origin:0 0;">2.8nF</div>
<div class="t" style="left:872px;top:825.06px;font-size:11px;line-height:14px;color:#000;font-weight:normal;transform:scaleX(0.95);transform-origin:0 0;">5uH</div>
<div class="t" style="left:1021px;top:825.06px;font-size:11px;line-height:14px;color:#000;font-weight:normal;transform:scaleX(0.95);transform-origin:0 0;">6.2uH</div>
<div class="a" style="left:1222px;top:661px;width:18px;height:254px;background-color:#FFFFFF;background-image:repeating-conic-gradient(#EDEADF 0 25%,#FFFFFF 0 50%);background-size:2px 2px;border-left:1px solid #8E8C80"></div>
<div class="a" style="left:1223px;top:661px;width:17px;height:18px;background:#FAF8EF;border-bottom:1px solid #8E8C80;border-right:1px solid #E0DDCE"></div>
<svg style="left:1227px;top:667px" width="9" height="5"><path d="M0 5H9L4.5 0z" fill="#000"/></svg>
<div class="a" style="left:1223px;top:680px;width:17px;height:16px;background-color:#9A9890;background-image:repeating-conic-gradient(#5A5A58 0 25%,#F4F2EA 0 50%);background-size:2px 2px;border-top:1px solid #8E8C80;border-bottom:1px solid #8E8C80"></div>
<div class="a" style="left:1223px;top:896px;width:17px;height:18px;background:#FAF8EF;border-top:1px solid #fff;border-right:1px solid #E0DDCE"></div>
<svg style="left:1227px;top:905px" width="9" height="5"><path d="M0 0H9L4.5 5z" fill="#000"/></svg>
<div class="a" style="left:673px;top:915px;width:567px;height:6px;background:#FFFFFF;border-top:1px solid #A8A698"></div>
<div class="a" style="left:1222px;top:915px;width:18px;height:6px;background:#D8D6CC"></div>
<div class="a" style="left:690px;top:916px;width:1px;height:5px;background:#707070"></div><div class="a" style="left:707px;top:916px;width:1px;height:5px;background:#707070"></div>
</body></html>
